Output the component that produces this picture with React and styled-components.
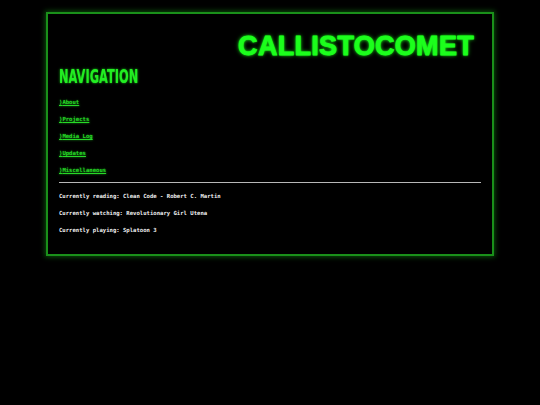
import React from "react";
import styled, { createGlobalStyle } from "styled-components";

const GlobalStyle = createGlobalStyle`
  html, body {
    margin: 0;
    padding: 0;
    background: #000;
  }
  body {
    font-family: "DejaVu Sans Mono", "Liberation Mono", monospace;
  }
`;

const Page = styled.div`
  width: 540px;
  min-height: 405px;
  padding-top: 12px;
  box-sizing: border-box;
  background: #000;
`;

const Frame = styled.div`
  width: 448px;
  margin: 0 auto;
  box-sizing: border-box;
  border: 2px solid #1a901a;
  box-shadow: 0 0 5px 1px rgba(30, 200, 30, 0.4);
  padding: 17px 11px 20px 11px;
`;

const Title = styled.h1`
  margin: 0;
  text-align: right;
  padding-right: 7px;
  font-family: "Liberation Sans", Arial, sans-serif;
  font-weight: 900;
  font-size: 27px;
  line-height: 31px;
  letter-spacing: 0.3px;
  color: #1cff1c;
  -webkit-text-stroke: 0.8px #1cff1c;
  text-shadow: 0 0 4px #19e619, 0 0 2px #1cff1c;
`;

const NavHeading = styled.h2`
  margin: 4px 0 0 0;
  display: inline-block;
  font-family: "DejaVu Sans", sans-serif;
  font-weight: bold;
  font-size: 19px;
  line-height: 20px;
  color: #22ee22;
  text-shadow: 0 0 3px #1ad21a;
  transform: scaleX(0.6);
  transform-origin: left center;
  white-space: nowrap;
`;

const NavList = styled.ul`
  list-style: none;
  margin: 8px 0 0 0;
  padding: 0;
  display: flex;
  flex-direction: column;
  gap: 9px;
`;

const NavItem = styled.li`
  line-height: 8px;
  height: 8px;
`;

const NavLink = styled.a`
  display: inline-block;
  font-family: "DejaVu Sans Mono", monospace;
  font-weight: bold;
  font-size: 5.6px;
  line-height: 8px;
  color: #27d827;
  text-decoration: underline;
  text-shadow: 0 0 2px #169616;
`;

const Rule = styled.hr`
  margin: 11px 0 0 0;
  border: none;
  border-top: 1px solid #b8b8b8;
  width: 422px;
`;

const Status = styled.div`
  margin-top: 9px;
  display: flex;
  flex-direction: column;
  gap: 9px;
`;

const StatusLine = styled.p`
  margin: 0;
  font-family: "DejaVu Sans Mono", monospace;
  font-weight: bold;
  font-size: 5.6px;
  line-height: 8px;
  color: #f2f2f2;
`;

const links = ["About", "Projects", "Media Log", "Updates", "Miscellaneous"];

const statuses = [
  "Currently reading: Clean Code - Robert C. Martin",
  "Currently watching: Revolutionary Girl Utena",
  "Currently playing: Splatoon 3",
];

export default function App() {
  return (
    <>
      <GlobalStyle />
      <Page>
        <Frame>
          <Title>CALLISTOCOMET</Title>
          <NavHeading>NAVIGATION</NavHeading>
          <NavList>
            {links.map((l) => (
              <NavItem key={l}>
                <NavLink href="#">⟩{l}</NavLink>
              </NavItem>
            ))}
          </NavList>
          <Rule />
          <Status>
            {statuses.map((s) => (
              <StatusLine key={s}>{s}</StatusLine>
            ))}
          </Status>
        </Frame>
      </Page>
    </>
  );
}
